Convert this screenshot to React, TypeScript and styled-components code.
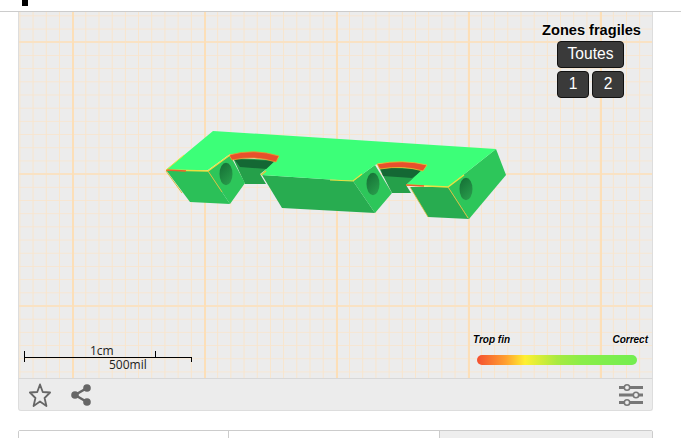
import styled, {createGlobalStyle} from "styled-components";

const GlobalStyle = createGlobalStyle`
    html, body {
        margin: 0;
        padding: 0;
        background: #fff;
        overflow: hidden;
    }
    body {
        font-family: "Liberation Sans", Arial, sans-serif;
    }
`;

const Page = styled.div`
    width: 681px;
    height: 438px;
    overflow: hidden;
`;

const TopBar = styled.header`
    height: 11px;
    border-bottom: 1px solid #ccc;
    padding-left: 22px;
`;

const TitleStub = styled.div`
    width: 6px;
    height: 6px;
    background: #000;
`;

const Main = styled.main`
    width: 635px;
    margin-left: 18px;
`;

const Canvas = styled.div`
    position: relative;
    height: 366px;
    box-sizing: border-box;
    border-left: 1px solid #ddd;
    border-right: 1px solid #ddd;
    background-color: #ececec;
    background-image:
        linear-gradient(to right, #fcdfb8 2px, transparent 2px),
        linear-gradient(to bottom, #f9e2c4 2px, transparent 2px),
        linear-gradient(to right, #f9e5cb 1px, transparent 1px),
        linear-gradient(to bottom, #f7e6d2 1px, transparent 1px);
    background-size: 132px 132px, 132px 132px, 13.2px 13.2px, 13.2px 13.2px;
    background-position: 53px 0, 0 29px, 0.4px 0, 0 3.4px;
`;

const ModelSvg = styled.svg`
    position: absolute;
    left: 0;
    top: 0;
    width: 633px;
    height: 366px;
`;

const ZonesPanel = styled.div`
    position: absolute;
    top: 10px;
    right: 11px;
    display: flex;
    flex-direction: column;
    align-items: center;
`;

const ZonesTitle = styled.div`
    font-size: 14.6px;
    line-height: 16px;
    font-weight: 700;
    color: #000;
    margin-bottom: 3px;
    text-shadow: 0 0 2px #fff;
`;

const ZoneButtons = styled.div`
    display: flex;
    flex-direction: column;
    gap: 3px;
    margin-right: 2px;
`;

const ZoneRow = styled.div`
    display: flex;
    gap: 3px;
`;

const ZoneButton = styled.button<{$wide?: boolean}>`
    width: ${({$wide}) => ($wide ? "67px" : "32px")};
    height: 27px;
    padding: 0 0 2px;
    box-sizing: border-box;
    border: 1px solid #111;
    border-radius: 4px;
    background: #3a3a3a;
    color: #fff;
    font-family: "Liberation Sans", Arial, sans-serif;
    font-size: 15.6px;
`;

const ScaleBar = styled.div`
    position: absolute;
    left: 5px;
    top: 332px;
    width: 170px;
    height: 22px;
`;

const ScaleSvg = styled.svg`
    display: block;
    width: 170px;
    height: 22px;
`;

const ScaleLabel = styled.span<{$left: number; $top: number}>`
    position: absolute;
    left: ${({$left}) => $left}px;
    top: ${({$top}) => $top}px;
    font-family: "Open Sans", sans-serif;
    font-size: 12px;
    line-height: 14px;
    color: #222;
`;

const Legend = styled.div`
    position: absolute;
    left: 454px;
    top: 322px;
    width: 175px;
`;

const LegendLabels = styled.div`
    display: flex;
    justify-content: space-between;
    font-size: 10px;
    line-height: 12px;
    font-weight: 700;
    font-style: italic;
    color: #000;
    text-shadow: 0 0 2px #fff;
`;

const LegendBar = styled.div`
    width: 160px;
    height: 10px;
    margin: 9px 0 0 4px;
    border-radius: 5px;
    background: linear-gradient(to right, #f44f30 0%, #ffa030 18%, #fff030 30%, #a8ea40 50%, #8aee48 65%, #72ee50 100%);
`;

const Toolbar = styled.div`
    display: flex;
    align-items: center;
    justify-content: space-between;
    height: 33px;
    box-sizing: border-box;
    padding: 0 9px 0 10px;
    background: #ececec;
    border: 1px solid #ddd;
    border-top-color: #d8d8d8;
    border-radius: 0 0 3px 3px;
`;

const ToolGroup = styled.div`
    display: flex;
    align-items: center;
    gap: 20px;
`;

const Tabs = styled.nav`
    display: grid;
    grid-template-columns: 209px 211px 1fr;
    height: 40px;
    margin-top: 19px;
    box-sizing: border-box;
    border: 1px solid #ccc;
    border-radius: 2px 2px 0 0;
`;

const Tab = styled.div<{$muted?: boolean}>`
    background: ${({$muted}) => ($muted ? "#eee" : "#fff")};
    & + & {
        border-left: 1px solid #ccc;
    }
`;

const FACE_TOP = "#3cff78";
const FACE_FRONT = "#28ac50";
const FACE_FRONT_LIGHT = "#2bc058";
const FACE_SIDE = "#2dc65a";

const Hole = ({cx, cy}: {cx: number; cy: number}) => (
    <ellipse cx={cx} cy={cy} rx="6.5" ry="11.3" fill="url(#holeShade)"/>
);

const Model = () => (
    <ModelSvg viewBox="19 12 633 366">
        <defs>
            <linearGradient id="holeShade" x1="0" y1="0" x2="0.6" y2="1">
                <stop offset="0" stopColor="#146c34"/>
                <stop offset="1" stopColor="#279a4a"/>
            </linearGradient>
        </defs>

        {/* inner recesses */}
        <polygon points="233,158 278,160 260,174 266,184 245,184" fill="#25a04a"/>
        <polygon points="234,159 278,161 267,169 240,167" fill="#146834"/>
        <polygon points="378,166 425,169 406,185 411,193 392,193" fill="#25a04a"/>
        <polygon points="380,167 424,170 412,178 383,176" fill="#146834"/>

        {/* left block */}
        <polygon points="166,170 208,171 230,204 190,202" fill={FACE_FRONT_LIGHT}/>
        <polygon points="208,171 230,155 245,183 230,204" fill={FACE_SIDE}/>
        <Hole cx={226} cy={174}/>

        {/* middle block */}
        <polygon points="262,175 353,181 375,213 282,208" fill={FACE_FRONT}/>
        <polygon points="353,181 375,165 392,193 375,213" fill={FACE_SIDE}/>
        <Hole cx={373} cy={184}/>

        {/* right block */}
        <polygon points="410,187 448,187 469,219 428,217" fill={FACE_FRONT}/>
        <polygon points="496,149 506,175 469,219 448,187" fill={FACE_SIDE}/>
        <Hole cx={466} cy={189}/>

        {/* top face */}
        <polygon
            points="166,170 213,131 496,149 448,187 410,185 406,185 427,165 380,163 375,165 353,181 262,175 260,175 279,157 230,154 208,170"
            fill={FACE_TOP}/>

        {/* thin zones */}
        <path d="M229 155 Q254 148 279 156 L276 162 Q254 155 232 160 Z" fill="#e8502c" stroke="#e8a030" strokeWidth="0.8"/>
        <path d="M377 164 Q403 159 427 165 L423 171 Q403 165 380 169 Z" fill="#e8502c" stroke="#e8c030" strokeWidth="0.8"/>
        <polyline points="166,170 208,171 230,155" fill="none" stroke="#e9e040" strokeWidth="1.4"/>
        <polyline points="166,170 186,171" fill="none" stroke="#e8602c" strokeWidth="1.4"/>
        <polyline points="166,170 184,155" fill="none" stroke="#e9e040" strokeWidth="1"/>
        <polyline points="166,171 182,193" fill="none" stroke="#d8c040" strokeWidth="1"/>
        <polyline points="208,171 222,192" fill="none" stroke="#d8c040" strokeWidth="1"/>
        <polyline points="330,180 353,181 362,174" fill="none" stroke="#e9e040" strokeWidth="1.2"/>
        <polyline points="261,175 266,171" fill="none" stroke="#e9c040" strokeWidth="1.6"/>
        <polyline points="406,185 448,187 464,175" fill="none" stroke="#e9e040" strokeWidth="1.4"/>
        <polyline points="406,185 424,186" fill="none" stroke="#e8602c" strokeWidth="1.4"/>
        <polyline points="448,187 468,218" fill="none" stroke="#d8c040" strokeWidth="1"/>
        <polyline points="410,187 428,217" fill="none" stroke="#d8c040" strokeWidth="0.8"/>
    </ModelSvg>
);

const StarIcon = () => (
    <svg width="22" height="24" viewBox="0 0 24 24" preserveAspectRatio="none">
        <polygon points="12,1.5 15,9 23,9.5 17,15 19,23 12,18.5 5,23 7,15 1,9.5 9,9" fill="none" stroke="#666" strokeWidth="2" strokeLinejoin="round"/>
    </svg>
);

const ShareIcon = () => (
    <svg width="20" height="24" viewBox="0 0 20 24">
        <path d="M16 5 L4 12 L16 19" fill="none" stroke="#666" strokeWidth="2.5"/>
        <circle cx="16" cy="5" r="3.8" fill="#666"/>
        <circle cx="4" cy="12" r="3.8" fill="#666"/>
        <circle cx="16" cy="19" r="3.8" fill="#666"/>
    </svg>
);

const SlidersIcon = () => (
    <svg width="24" height="22" viewBox="0 0 24 22">
        <g stroke="#777" fill="#ececec">
            <line x1="0" y1="3.5" x2="24" y2="3.5" strokeWidth="3"/>
            <line x1="0" y1="11" x2="24" y2="11" strokeWidth="3"/>
            <line x1="0" y1="18.5" x2="24" y2="18.5" strokeWidth="3"/>
            <circle cx="8" cy="3.5" r="2.7" strokeWidth="1.6"/>
            <circle cx="17" cy="11" r="2.7" strokeWidth="1.6"/>
            <circle cx="8" cy="18.5" r="2.7" strokeWidth="1.6"/>
        </g>
    </svg>
);

export default function App() {
    return (
        <Page>
            <GlobalStyle/>
            <TopBar>
                <TitleStub/>
            </TopBar>
            <Main>
                <Canvas>
                    <Model/>
                    <ZonesPanel>
                        <ZonesTitle>Zones fragiles</ZonesTitle>
                        <ZoneButtons>
                            <ZoneButton $wide>Toutes</ZoneButton>
                            <ZoneRow>
                                <ZoneButton>1</ZoneButton>
                                <ZoneButton>2</ZoneButton>
                            </ZoneRow>
                        </ZoneButtons>
                    </ZonesPanel>
                    <ScaleBar>
                        <ScaleSvg viewBox="0 0 170 22">
                            <g stroke="#000" strokeWidth="1">
                                <line x1="0" y1="13.5" x2="167" y2="13.5"/>
                                <line x1="0.5" y1="7" x2="0.5" y2="18"/>
                                <line x1="131.5" y1="7" x2="131.5" y2="13"/>
                                <line x1="167.5" y1="13" x2="167.5" y2="18"/>
                            </g>
                        </ScaleSvg>
                        <ScaleLabel $left={66} $top={0}>1cm</ScaleLabel>
                        <ScaleLabel $left={85} $top={14}>500mil</ScaleLabel>
                    </ScaleBar>
                    <Legend>
                        <LegendLabels>
                            <span>Trop fin</span>
                            <span>Correct</span>
                        </LegendLabels>
                        <LegendBar/>
                    </Legend>
                </Canvas>
                <Toolbar>
                    <ToolGroup>
                        <StarIcon/>
                        <ShareIcon/>
                    </ToolGroup>
                    <SlidersIcon/>
                </Toolbar>
                <Tabs>
                    <Tab/>
                    <Tab/>
                    <Tab $muted/>
                </Tabs>
            </Main>
        </Page>
    );
}
